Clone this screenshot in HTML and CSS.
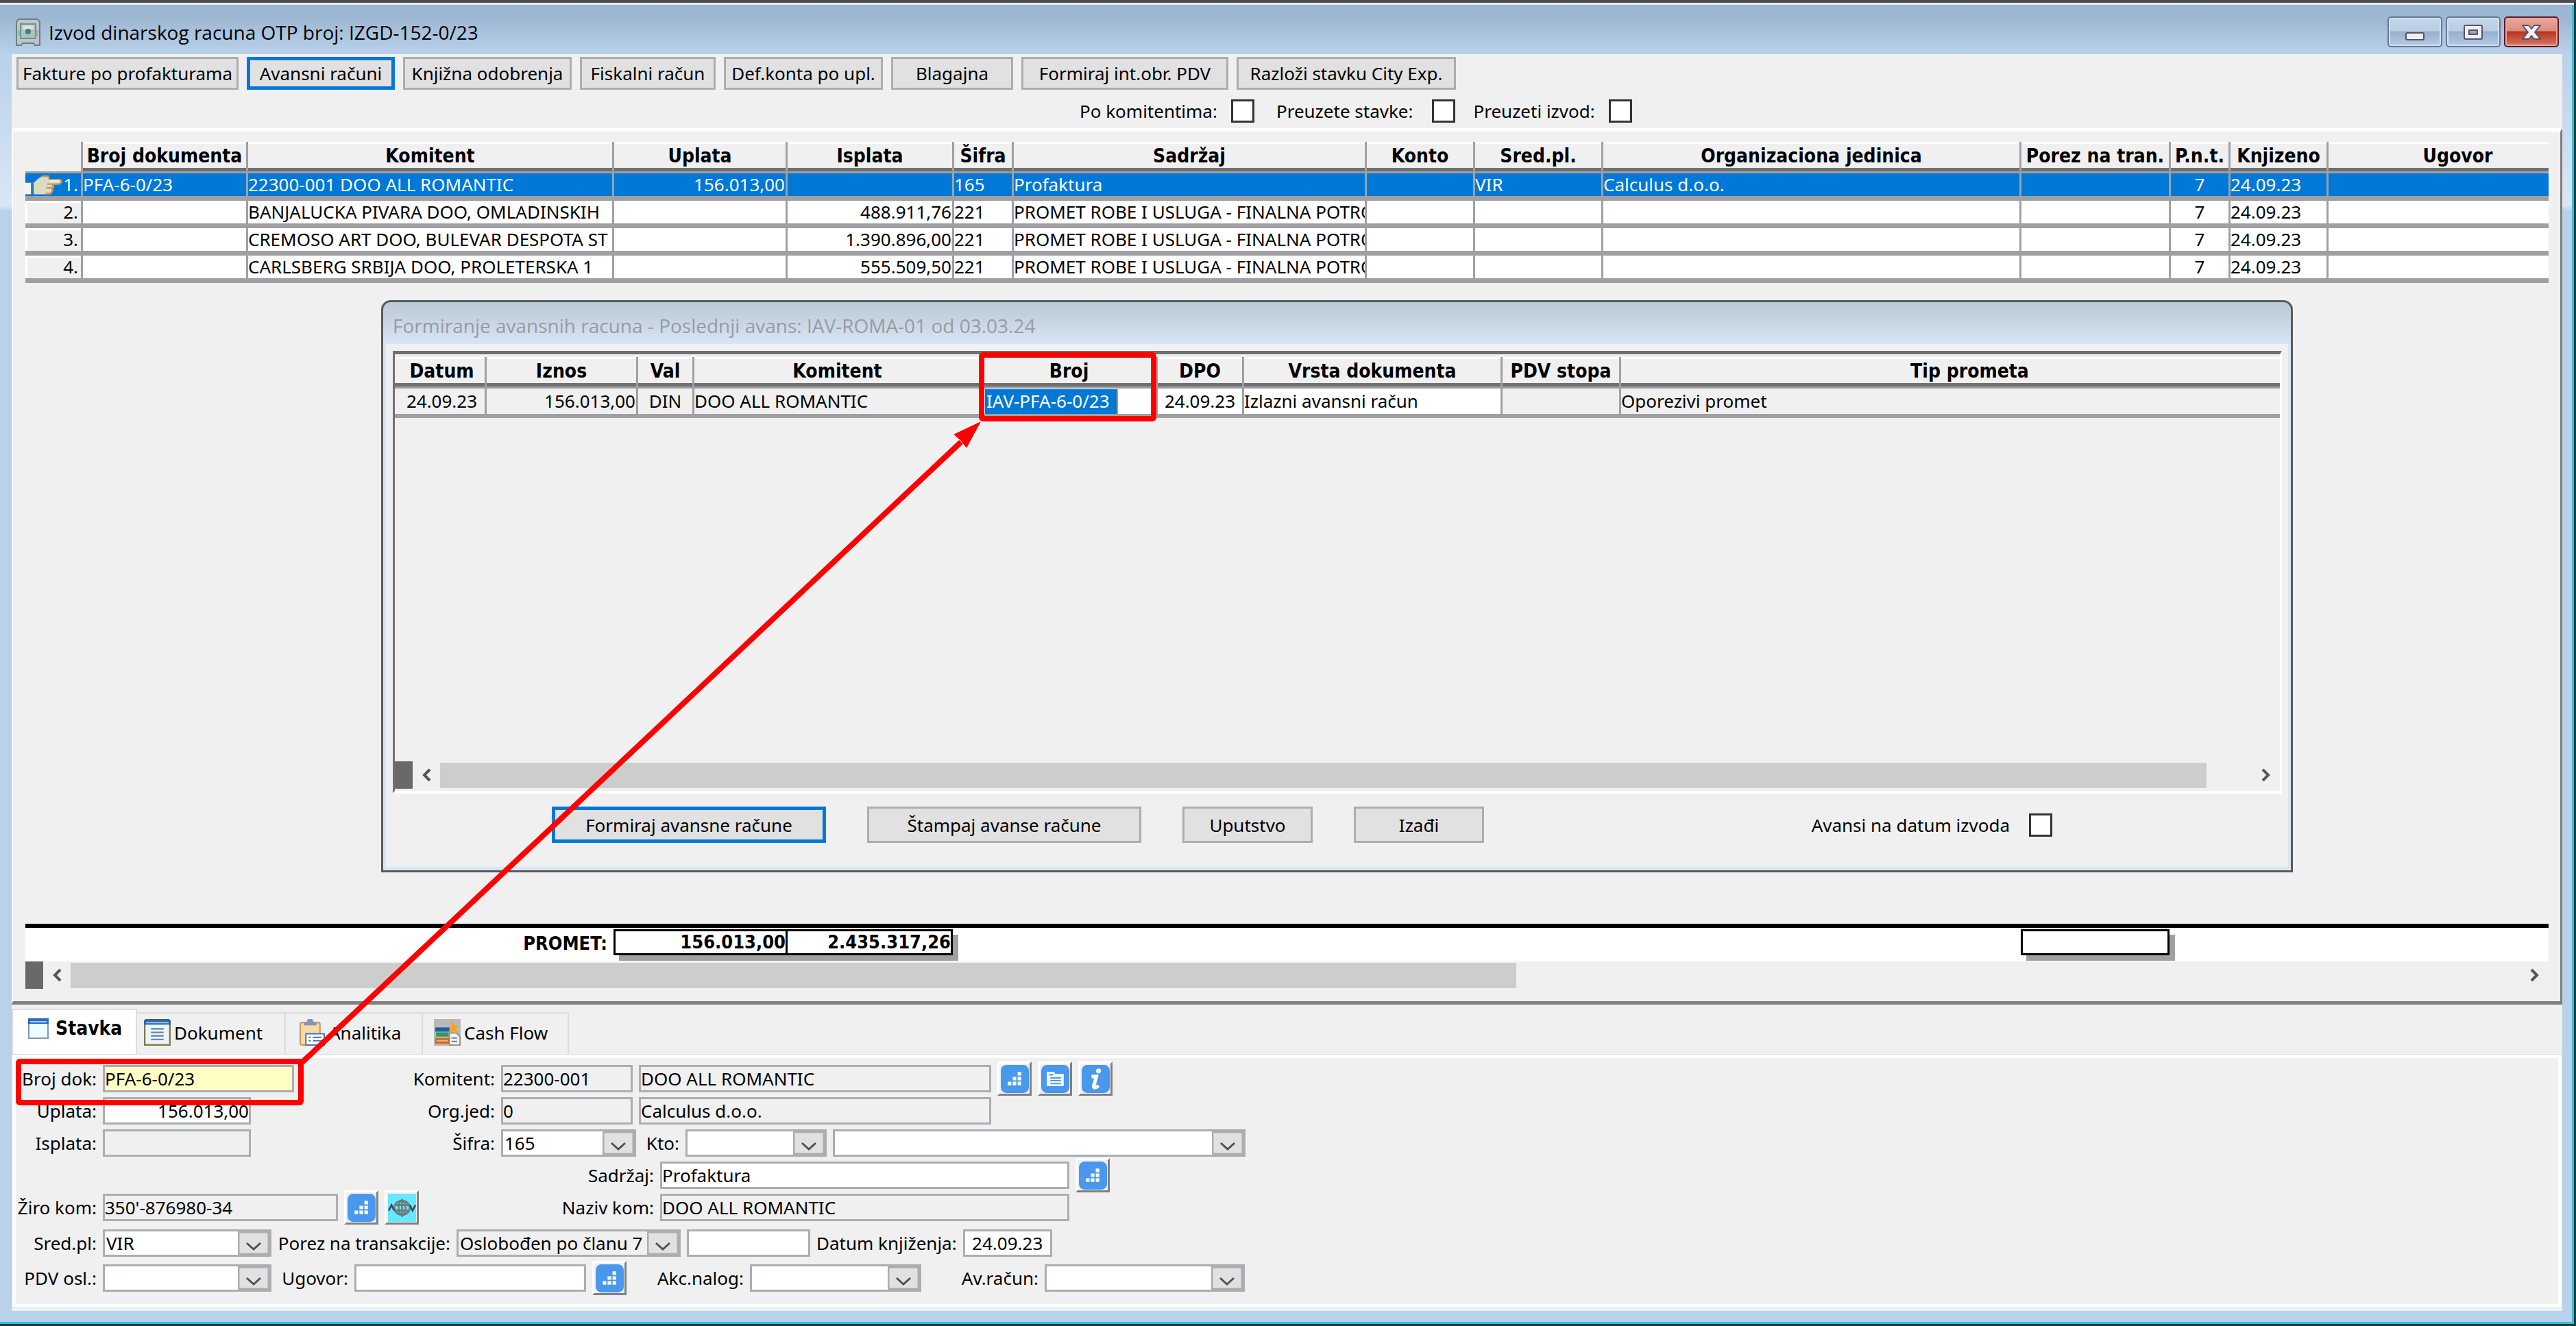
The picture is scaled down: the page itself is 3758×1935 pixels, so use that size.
FILE: index.html
```html
<!DOCTYPE html>
<html lang="sr-Latn">
<head>
<meta charset="utf-8">
<title>Izvod dinarskog racuna OTP broj: IZGD-152-0/23</title>
<link rel="stylesheet" href="styles.css">
</head>
<body>
<svg class="defs" aria-hidden="true">
  <symbol id="i-steps" viewBox="0 0 40 40">
    <rect width="40" height="40" rx="8" fill="#4a98ee"/>
    <path fill="#fff" d="M24 10h5v5h-5zM17 17h5v5h-5zM24 17h5v5h-5zM10 24h5v5h-5zM17 24h5v5h-5zM24 24h5v5h-5z"/>
  </symbol>
  <symbol id="i-card" viewBox="0 0 40 40">
    <rect width="40" height="40" rx="8" fill="#4a98ee"/>
    <path fill="#fff" d="M8 10h11v3h13v17H8z"/>
    <path stroke="#4a98ee" stroke-width="2" d="M11 14h6M13 18.500h15M13 22.500h15M13 26.500h15"/>
  </symbol>
  <symbol id="i-info" viewBox="0 0 40 40">
    <rect width="40" height="40" rx="8" fill="#4a98ee"/>
    <circle cx="24" cy="8.500" r="3.500" fill="#fff"/>
    <path fill="none" stroke="#fff" stroke-width="5" d="M14 16.500h7l-4 14c0 3 4 2 7-1"/>
  </symbol>
  <symbol id="i-globe" viewBox="0 0 40 40">
    <rect width="40" height="40" fill="#66e8ff"/>
    <g fill="none" stroke="#6b7a7a" stroke-width="2.500">
      <ellipse cx="20" cy="20" rx="11" ry="10"/><ellipse cx="20" cy="20" rx="5" ry="10"/>
      <path d="M10 16h20M10 24h20M20 7v26"/><path stroke="#445" d="M1 24l4-8 4 8M31 16l4 8 4-8"/>
    </g>
  </symbol>
</svg>

<div class="window">
  <header class="titlebar">
    <svg class="app-icon" viewBox="0 0 36 40" aria-hidden="true">
      <path fill="#c3c3c9" stroke="#5f8682" stroke-width="2" d="M4 1h28l3 4v34h-7l-2-3H10l-2 3H1V5z"/>
      <path fill="#a9adb2" d="M3 17h30v8H3z"/>
      <rect x="7" y="8" width="22" height="21" fill="#aebfc0" stroke="#6f9490" stroke-width="2"/>
      <path fill="#dfe3e5" d="M10 10h16v6H10z"/><circle cx="18" cy="19" r="4" fill="#34857a"/>
    </svg>
    <h1 class="title">Izvod dinarskog racuna OTP broj: IZGD-152-0/23</h1>
    <div class="controls">
      <button class="ctl" aria-label="Minimize"><svg viewBox="0 0 30 24"><rect x="2" y="13" width="26" height="10" rx="2" fill="#f0f0f0" stroke="#55556b" stroke-width="2"/></svg></button>
      <button class="ctl" aria-label="Maximize"><svg viewBox="0 0 30 24"><rect x="2" y="2" width="26" height="20" rx="2" fill="#f0f0f0" stroke="#55556b" stroke-width="2"/><rect x="9" y="9" width="12" height="6" fill="#8fa9c6" stroke="#55556b" stroke-width="2"/></svg></button>
      <button class="ctl ctl-close" aria-label="Close"><svg viewBox="0 0 30 24"><path fill="#f0f0f0" stroke="#55556b" stroke-width="2" stroke-linejoin="round" d="M2 2h9l4 5 4-5h9l-8 10 8 10h-9l-4-5-4 5H2l8-10z"/></svg></button>
    </div>
  </header>

  <nav class="toolbar">
    <button class="btn b-fakture">Fakture po profakturama</button>
    <button class="btn b-avansni is-default">Avansni računi</button>
    <button class="btn b-knjizna">Knjižna odobrenja</button>
    <button class="btn b-fiskalni">Fiskalni račun</button>
    <button class="btn b-konta">Def.konta po upl.</button>
    <button class="btn b-blagajna">Blagajna</button>
    <button class="btn b-pdv">Formiraj int.obr. PDV</button>
    <button class="btn b-razlozi">Razloži stavku City Exp.</button>
  </nav>

  <div class="filters">
    <label class="check">Po komitentima: <input type="checkbox"></label>
    <label class="check check-loose">Preuzete stavke: <input type="checkbox"></label>
    <label class="check">Preuzeti izvod: <input type="checkbox"></label>
  </div>

  <main class="panel">
    <table class="grid">
      <colgroup>
        <col class="c-num"><col class="c-doc"><col class="c-kom"><col class="c-upl"><col class="c-isp"><col class="c-sif"><col class="c-sad"><col class="c-kto"><col class="c-sred"><col class="c-org"><col class="c-por"><col class="c-pnt"><col class="c-knj"><col>
      </colgroup>
      <thead>
        <tr><th class="blank"></th><th>Broj dokumenta</th><th>Komitent</th><th>Uplata</th><th>Isplata</th><th>Šifra</th><th>Sadržaj</th><th>Konto</th><th>Sred.pl.</th><th>Organizaciona jedinica</th><th>Porez na tran.</th><th>P.n.t.</th><th>Knjizeno</th><th>Ugovor</th></tr>
      </thead>
      <tbody>
        <tr class="selected"><td class="num"><span class="row-no"><svg class="hand" viewBox="0 0 58 30" aria-hidden="true"><path fill="#f4f4ec" d="M0 12h9v18H0z"/><path fill="#2f78b8" d="M9 11h3v19H9z"/><path fill="#dcdcc0" d="M13 12l8-7 6-4h9l2 5h17l3 4-3 4H44l1 5-3 3 1 4-4 4H13z"/><path fill="none" stroke="#c8955f" stroke-width="2.500" d="M26 2h10l2 5h16l3 3-3 4H41l3 3-3 4 2 3-4 5h-7M34 14h7M33 20h8"/><path fill="#f7f3ea" d="M38 8h16v2H38z"/></svg>1.</span></td><td>PFA-6-0/23</td><td>22300-001 DOO ALL ROMANTIC</td><td class="r">156.013,00</td><td></td><td>165</td><td>Profaktura</td><td></td><td>VIR</td><td>Calculus d.o.o.</td><td></td><td class="m">7</td><td>24.09.23</td><td></td></tr>
        <tr><td class="num">2.</td><td></td><td>BANJALUCKA PIVARA DOO, OMLADINSKIH</td><td></td><td class="r">488.911,76</td><td>221</td><td class="clip">PROMET ROBE I USLUGA - FINALNA POTRO</td><td></td><td></td><td></td><td></td><td class="m">7</td><td>24.09.23</td><td></td></tr>
        <tr><td class="num">3.</td><td></td><td>CREMOSO ART DOO, BULEVAR DESPOTA ST</td><td></td><td class="r">1.390.896,00</td><td>221</td><td class="clip">PROMET ROBE I USLUGA - FINALNA POTRO</td><td></td><td></td><td></td><td></td><td class="m">7</td><td>24.09.23</td><td></td></tr>
        <tr><td class="num">4.</td><td></td><td>CARLSBERG SRBIJA DOO, PROLETERSKA 1</td><td></td><td class="r">555.509,50</td><td>221</td><td class="clip">PROMET ROBE I USLUGA - FINALNA POTRO</td><td></td><td></td><td></td><td></td><td class="m">7</td><td>24.09.23</td><td></td></tr>
      </tbody>
    </table>

    <section class="dialog" role="dialog" aria-labelledby="dlg-title">
      <h2 class="dialog-title" id="dlg-title">Formiranje avansnih racuna - Poslednji avans: IAV-ROMA-01 od 03.03.24</h2>
      <div class="dialog-body">
        <div class="dialog-grid">
          <table class="grid">
            <colgroup><col class="d-dat"><col class="d-izn"><col class="d-val"><col class="d-kom"><col class="d-broj"><col class="d-dpo"><col class="d-vrs"><col class="d-pdv"><col></colgroup>
            <thead><tr><th>Datum</th><th>Iznos</th><th>Val</th><th>Komitent</th><th>Broj</th><th>DPO</th><th>Vrsta dokumenta</th><th>PDV stopa</th><th>Tip prometa</th></tr></thead>
            <tbody><tr><td class="m">24.09.23</td><td class="r">156.013,00</td><td class="m">DIN</td><td>DOO ALL ROMANTIC</td><td class="edit"><input class="cell-input" aria-label="Broj" value="IAV-PFA-6-0/23"></td><td class="edit m">24.09.23</td><td class="edit">Izlazni avansni račun</td><td></td><td>Oporezivi promet</td></tr></tbody>
          </table>
          <div class="scroll">
            <span class="split"></span>
            <button class="arrow" aria-label="Levo"><svg viewBox="0 0 14 20"><path d="M12 2L4 10l8 8"/></svg></button>
            <span class="track"><span class="thumb thumb-dialog"></span></span>
            <button class="arrow" aria-label="Desno"><svg viewBox="0 0 14 20"><path d="M2 2l8 8-8 8"/></svg></button>
          </div>
        </div>
        <div class="dialog-actions">
          <button class="btn a-wide is-default">Formiraj avansne račune</button>
          <button class="btn a-wide">Štampaj avanse račune</button>
          <button class="btn a-small">Uputstvo</button>
          <button class="btn a-small">Izađi</button>
          <label class="check">Avansi na datum izvoda <input type="checkbox"></label>
        </div>
      </div>
    </section>

    <div class="totals">
      <span class="totals-label">PROMET:</span>
      <span class="sum-pair"><output>156.013,00</output><output>2.435.317,26</output></span>
      <span></span>
      <output class="sum-box"></output>
    </div>
    <div class="scroll">
      <span class="split"></span>
      <button class="arrow" aria-label="Levo"><svg viewBox="0 0 14 20"><path d="M12 2L4 10l8 8"/></svg></button>
      <span class="track"><span class="thumb thumb-main"></span></span>
      <button class="arrow" aria-label="Desno"><svg viewBox="0 0 14 20"><path d="M2 2l8 8-8 8"/></svg></button>
    </div>
  </main>

  <section class="details">
    <div class="tabs" role="tablist">
      <button class="tab t-stavka is-active" role="tab" aria-selected="true"><svg class="tab-icon-s" viewBox="0 0 30 30"><rect x="1" y="1" width="28" height="28" fill="#ecffff" stroke="#8a93b5" stroke-width="2"/><path fill="#2c6cc0" d="M0 0h30v8H0z"/><path fill="#a9cdf2" d="M3 4h24v2H3z"/></svg>Stavka</button>
      <button class="tab t-dokument" role="tab"><svg class="tab-icon" viewBox="0 0 38 38"><rect x="1" y="3" width="36" height="34" fill="#eaf6f6" stroke="#7f7a4c" stroke-width="2.500"/><path fill="#2f659f" d="M2 0h34l2 3v5H0V3z"/><path fill="#8ab8de" d="M3 4h32v2H3z"/><path stroke="#5f7fae" stroke-width="2" d="M10 14h18M10 19h18M10 24h18M10 29h18"/></svg>Dokument</button>
      <button class="tab t-analitika" role="tab"><svg class="tab-icon" viewBox="0 0 38 38"><rect x="2" y="5" width="28" height="32" rx="3" fill="#f7d9a4" stroke="#c59a5b" stroke-width="2"/><path fill="#8494b4" d="M7 9V6l4-2 2-4h6l2 4 4 2v3z"/><rect x="10" y="21" width="26" height="16" fill="#fff" stroke="#4a7ab5" stroke-width="2"/><path stroke="#4a6fa8" stroke-width="2" d="M14 26h3M20 26h12M14 31h3M20 31h12"/></svg>Analitika</button>
      <button class="tab t-cash" role="tab"><svg class="tab-icon" viewBox="0 0 38 38"><path fill="#b9b9b9" d="M0 0h38v38H0z"/><path fill="#1d5fa3" d="M2 12h20v6H2z"/><path fill="#2f9b5f" d="M3 19h18v6H3z"/><path fill="#d2691e" d="M2 27h20v8H2z"/><path fill="#e9b48a" d="M4 30h16v2H4z"/><path fill="#f5a51c" d="M27 3l3 6 5 1-4 4 2 6-6-3-5 6 1-9z"/><path fill="#f3f3f3" stroke="#8a8468" stroke-width="1.500" d="M22 20h10l5 5v12H22z"/><path stroke="#5b83b5" stroke-width="2" d="M25 27h8M25 32h8"/></svg>Cash Flow</button>
    </div>

    <form class="page">
      <div class="columns">
        <div>
          <div class="row"><label class="l-a" for="brojdok">Broj dok:</label><input class="f w-brojdok hot" id="brojdok" value="PFA-6-0/23" readonly></div>
          <div class="row"><label class="l-a" for="uplata">Uplata:</label><input class="f w-iznos r" id="uplata" value="156.013,00"></div>
          <div class="row"><label class="l-a" for="isplata">Isplata:</label><input class="f w-iznos" id="isplata" readonly></div>
          <div class="row"></div>
          <div class="row"><label class="l-a" for="ziro">Žiro kom:</label><input class="f w-ziro" id="ziro" value="350'-876980-34" readonly><button type="button" class="tool" aria-label="Izbor žiro računa"><svg><use href="#i-steps"/></svg></button><button type="button" class="tool" aria-label="Internet"><svg><use href="#i-globe"/></svg></button></div>
        </div>
        <div>
          <div class="row"><label class="l-b" for="komitent">Komitent:</label><input class="f w-code" id="komitent" value="22300-001" readonly><input class="f w-name" aria-label="Naziv komitenta" value="DOO ALL ROMANTIC" readonly><button type="button" class="tool" aria-label="Izbor komitenta"><svg><use href="#i-steps"/></svg></button><button type="button" class="tool" aria-label="Kartica"><svg><use href="#i-card"/></svg></button><button type="button" class="tool" aria-label="Informacije"><svg><use href="#i-info"/></svg></button></div>
          <div class="row"><label class="l-b" for="orgjed">Org.jed:</label><input class="f w-code" id="orgjed" value="0" readonly><input class="f w-name" aria-label="Organizaciona jedinica" value="Calculus d.o.o." readonly></div>
          <div class="row"><label class="l-b" for="sifra">Šifra:</label><select class="f w-sifra" id="sifra"><option>165</option></select><label class="l-kto" for="kto">Kto:</label><select class="f w-kto" id="kto"><option></option></select><select class="f w-konto" aria-label="Naziv konta"><option></option></select></div>
          <div class="row"><label class="l-c" for="sadrzaj">Sadržaj:</label><input class="f w-sadrzaj" id="sadrzaj" value="Profaktura"><button type="button" class="tool" aria-label="Izbor sadržaja"><svg><use href="#i-steps"/></svg></button></div>
          <div class="row"><label class="l-c" for="naziv">Naziv kom:</label><input class="f w-sadrzaj" id="naziv" value="DOO ALL ROMANTIC" readonly></div>
        </div>
      </div>
      <div class="row row-tall"><label class="l-a" for="sred">Sred.pl:</label><select class="f w-sred" id="sred"><option>VIR</option></select><label class="l-porez" for="porez">Porez na transakcije:</label><select class="f w-porez muted" id="porez"><option>Oslobođen po članu 7</option></select><input class="f w-porez2" aria-label="Iznos poreza"><label for="datum">Datum knjiženja:</label><input class="f w-datum m" id="datum" value="24.09.23"></div>
      <div class="row row-tall"><label class="l-a" for="pdvosl">PDV osl.:</label><select class="f w-sred" id="pdvosl"><option></option></select><label class="l-ugovor" for="ugovor">Ugovor:</label><input class="f w-ugovor" id="ugovor"><button type="button" class="tool" aria-label="Izbor ugovora"><svg><use href="#i-steps"/></svg></button><label class="l-akc" for="akc">Akc.nalog:</label><select class="f w-akc" id="akc"><option></option></select><label class="l-akc" for="av">Av.račun:</label><select class="f w-av" id="av"><option></option></select></div>
    </form>
  </section>

  <svg class="callout" aria-hidden="true">
    <rect x="27" y="1549" width="412" height="60" rx="2"/>
    <rect x="1432" y="518" width="251" height="93" rx="2"/>
    <path d="M441 1550L1402 645"/>
    <path class="head" d="M1430 616l-38 18 10 9 8 10z"/>
  </svg>
</div>
</body>
</html>
```
FILE: styles.css
```css
* { box-sizing: border-box; }

body {
  margin: 0;
  background: #f0f0f0;
  color: #000;
  font: 26px/32px "Noto Sans", sans-serif;
}

button, input, select { font: inherit; color: inherit; margin: 0; }
.defs { display: none; }

/* window frame */
.window {
  position: relative;
  display: flex;
  flex-direction: column;
  min-height: 100vh;
  padding: 0 17px 19px 17px;
  border: solid #22393c;
  border-width: 4px 3px 3px 0;
  border-top-color: #4a4a4a;
  box-shadow: inset 0 3px #e4ecf3, inset -3px -3px #2cc3dc;
  background: linear-gradient(#99b4d1, #9fb9d5 25px, #b9d1ea 75px, #dae6f4 296px, #b9d1ea 304px);
}

.titlebar {
  display: flex;
  align-items: center;
  height: 75px;
  padding: 16px 5px 6px 6px;
}
.app-icon { width: 36px; height: 40px; }
.title { flex: 1; margin: 0 0 0 12px; font: 28px/36px "Open Sans", sans-serif; }
.controls { display: flex; gap: 5px; }
.ctl {
  display: flex; align-items: center; justify-content: center;
  width: 80px; height: 45px; padding: 0;
  border: 2px solid #66799a;
  border-radius: 5px;
  box-shadow: inset 0 0 0 2px #d3e0ef;
  background: linear-gradient(#c5d6e9, #b9cde3 46%, #97b0cc 50%, #b3cbe5);
}
.ctl svg { width: 30px; height: 24px; }
.ctl-close {
  border-color: #5a1a28;
  box-shadow: inset 0 0 0 2px #eba79c;
  background: linear-gradient(#eaa89c, #dd8c7f 46%, #b5351f 50%, #d67867);
}

/* toolbar */
.toolbar { display: flex; gap: 12px; padding: 4px 7px 0; background: #f0f0f0; }
.btn {
  height: 48px; padding: 0;
  border: 3px solid #adadad;
  background: #e1e1e1;
  white-space: nowrap;
}
.btn.is-default { border: 5px solid #0078d7; }
.b-fakture { width: 324px; }
.b-avansni { width: 216px; }
.b-knjizna { width: 246px; }
.b-fiskalni { width: 198px; }
.b-konta { width: 232px; }
.b-blagajna { width: 178px; }
.b-pdv { width: 302px; }
.b-razlozi { width: 320px; }

.filters {
  display: flex; align-items: center; gap: 26px;
  height: 56px;
  padding: 6px 0 0 1558px;
  background: #f0f0f0;
}
.check { display: flex; align-items: center; gap: 20px; white-space: nowrap; }
.check-loose { margin-left: 6px; gap: 28px; }
.check input {
  appearance: none;
  width: 34px; height: 34px;
  border: 3px solid #333;
  background: #fff;
}

/* main panel */
.panel {
  position: relative;
  flex: 1;
  display: flex;
  flex-direction: column;
  padding: 15px 17px 18px 18px;
  border: solid #808080;
  border-width: 5px 3px 5px 2px;
  border-top-color: #fff;
  border-left-color: #fff;
  background: #f0f0f0;
}

.grid { width: 100%; table-layout: fixed; border-collapse: separate; border-spacing: 0; }
.grid th {
  height: 46px; padding: 0 0 4px;
  border-right: 3px solid #a0a0a4;
  box-shadow: inset 0 3px #fff, inset 0 -3px #a0a0a4, inset 0 -8px #707070;
  font: bold 28px/32px "DejaVu Sans Condensed", sans-serif;
  text-align: center;
  white-space: nowrap;
}
.grid th.blank { box-shadow: inset 0 -3px #a0a0a4; }
.grid td {
  height: 40px; padding: 0;
  border-right: 3px solid #a0a0a4;
  border-bottom: 7px solid #a0a0a4;
  background: #fff;
  line-height: 33px;
  white-space: nowrap;
}
.grid th:last-child, .grid td:last-child { border-right: 0; }
.grid th:last-child { padding-left: 56px; }
.grid .clip { overflow: hidden; }
.grid .r { text-align: right; padding-right: 1px; }
.grid .m { text-align: center; }
.grid td.num { background: #f0f0f0; text-align: right; padding-right: 4px; box-shadow: inset 3px 3px #fff; }
.grid .selected td { background: #0078d7; color: #fff; box-shadow: none; }
.row-no { display: flex; justify-content: space-between; }
.hand { width: 54px; height: 33px; }

.c-num { width: 84px; }
.c-doc { width: 241px; }
.c-kom { width: 534px; }
.c-upl { width: 253px; }
.c-isp { width: 243px; }
.c-sif { width: 87px; }
.c-sad { width: 515px; }
.c-kto { width: 158px; }
.c-sred { width: 187px; }
.c-org { width: 610px; }
.c-por { width: 218px; }
.c-pnt { width: 87px; }
.c-knj { width: 143px; }

.totals {
  display: grid;
  grid-template-columns: 858px 495px 1558px 217px 1fr;
  height: 55px;
  margin-top: auto;
  padding-top: 2px;
  border-top: 6px solid #000;
  background: #fff;
  font: bold 27px/32px "DejaVu Sans Condensed", sans-serif;
}
.totals-label { padding: 5px 9px 0 0; text-align: right; }
.sum-pair { display: grid; grid-template-columns: 254px 241px; }
.sum-pair output { border: 3px solid #000; text-align: right; }
.sum-pair output + output { border-left: 0; }
.sum-pair, .sum-box { height: 38px; background: #fff; box-shadow: 8px 8px #a0a0a0; }
.sum-box { border: 3px solid #000; }

.scroll { display: flex; align-items: center; height: 40px; }
.split { width: 26px; height: 100%; background: #696969; }
.arrow { display: flex; align-items: center; justify-content: center; width: 40px; height: 100%; padding: 0; border: 0; background: none; }
.arrow svg { width: 14px; height: 20px; fill: none; stroke: #555; stroke-width: 4; }
.track { flex: 1; height: 37px; }
.thumb { display: block; height: 100%; background: #cdcdcd; }
.thumb-dialog { width: calc(100% - 67px); }
.thumb-main { width: 59%; }

/* floating dialog */
.dialog {
  position: absolute;
  left: 537px; right: 390px; top: 246px; bottom: 188px;
  display: flex;
  flex-direction: column;
  padding: 0 4px 5px;
  border: 3px solid #5a5a5a;
  border-radius: 14px 14px 0 0;
  background: linear-gradient(#bccbd9, #c3d0dd 18px, #d8e5f4 60px);
}
.dialog-title { margin: 0; padding: 16px 12px 9px 10px; color: #989ba0; font: 28px/36px "Open Sans", sans-serif; }
.dialog-body { flex: 1; display: flex; flex-direction: column; padding: 10px 9px 0 10px; background: #f0f0f0; }
.dialog-grid {
  flex: 1;
  display: flex;
  flex-direction: column;
  border: solid #fff;
  border-width: 5px 3px 4px;
  border-top-color: #707070;
  border-left-color: #707070;
}
.dialog-grid .scroll { margin: auto 0 3px; }
.dialog .grid { margin-top: 4px; }
.dialog .grid td { height: 43px; border-bottom-width: 6px; background: #f0f0f0; line-height: 37px; }
.dialog .grid th:first-child, .dialog .grid td:first-child { padding-left: 6px; }
.dialog .grid td.edit { background: #fff; }
.d-dat { width: 134px; }
.d-izn { width: 221px; }
.d-val { width: 82px; }
.d-kom { width: 420px; }
.d-broj { width: 256px; }
.d-dpo { width: 126px; }
.d-vrs { width: 377px; }
.d-pdv { width: 173px; }
.cell-input {
  display: block;
  width: 194px; height: 36px; margin-left: 4px; padding: 0 0 0 2px;
  border: 0;
  border-right: 2px solid #ff8728;
  background: #0078d7;
  color: #fff;
}
.dialog-actions { display: flex; align-items: center; gap: 60px; padding: 19px 335px 35px 232px; }
.dialog-actions .btn { height: 53px; }
.dialog-actions .check { margin-left: auto; gap: 28px; }
.a-wide { width: 400px; }
.a-small { width: 190px; }

/* detail tabs */
.details { background: #f0f0f0; padding: 6px 0 4px; }
.tabs { display: flex; align-items: flex-end; height: 66px; }
.tab {
  display: flex; align-items: center; gap: 5px;
  height: 61px; padding: 0 0 4px;
  border: 2px solid #dcdcdc;
  border-bottom: 0;
  border-left: 0;
  background: #f0f0f0;
}
.tab.is-active { height: 66px; padding-bottom: 10px; border-left: 2px solid #dcdcdc; gap: 10px; background: #fff; font: bold 28px/32px "DejaVu Sans Condensed", sans-serif; }
.t-stavka.tab { width: 183px; padding-left: 22px; }
.t-dokument.tab { width: 217px; padding-left: 10px; }
.t-analitika.tab { width: 200px; padding-left: 19px; }
.t-cash.tab { width: 213px; padding-left: 16px; }
.tab-icon-s { width: 30px; height: 30px; }
.tab-icon { width: 39px; height: 39px; }

.page {
  padding: 11px 7px 18px;
  border: 1px solid #dcdcdc;
  box-shadow: inset 0 0 0 5px #fff;
}
.columns { display: grid; grid-template-columns: 576px 1fr; margin-bottom: 3px; }
.row { display: flex; align-items: center; gap: 9px; height: 47px; }
.row-tall { height: 51px; }
.row label { flex: none; text-align: right; white-space: nowrap; }
.l-a { width: 116px; }
.l-b { width: 121px; }
.l-c { width: 353px; }
.l-kto { width: 54px; }
.l-porez { width: 252px; }
.l-ugovor { width: 103px; }
.l-akc { width: 162px; }

.f {
  height: 40px; padding: 0;
  border: 3px solid #abadb3;
  border-radius: 0;
  background-color: #fff;
}
.f[readonly], .f.muted { background-color: #f0f0f0; }
.f.hot { background-color: #ffffc4; }
.f.r { text-align: right; }
.f.m { text-align: center; }
select.f {
  appearance: none;
  padding: 0 46px 0 2px;
  background-image: url("data:image/svg+xml,%3Csvg xmlns='http://www.w3.org/2000/svg' width='46' height='34'%3E%3Crect x='1' y='1' width='44' height='32' fill='%23e1e1e1' stroke='%23adadad' stroke-width='3'/%3E%3Cpath d='M13 17l10 9 10-9' fill='none' stroke='%23505050' stroke-width='3'/%3E%3C/svg%3E");
  background-repeat: no-repeat;
  background-position: right center;
}
.w-brojdok { width: 279px; }
.w-iznos { width: 216px; }
.w-ziro { width: 343px; }
.w-code { width: 192px; }
.w-name { width: 514px; }
.w-sifra { width: 197px; }
.w-kto { width: 206px; }
.w-konto { width: 602px; }
.w-sadrzaj { width: 597px; }
.w-sred { width: 246px; }
.w-porez { width: 327px; }
.w-porez2 { width: 180px; }
.w-datum { width: 130px; }
.w-ugovor { width: 338px; }
.w-akc { width: 250px; }
.w-av { width: 292px; }

.tool {
  flex: none;
  width: 50px; height: 50px; padding: 2px;
  border: 3px solid #808080;
  border-top-color: #fff;
  border-left-color: #fff;
  background: #f0f0f0;
}
.tool svg { display: block; width: 41px; height: 41px; }

/* red annotation above the form and the dialog */
.callout { position: absolute; left: 0; top: -4px; width: 100%; height: 100%; overflow: visible; pointer-events: none; fill: none; stroke: #f00; stroke-width: 8; }
.callout .head { fill: #f00; stroke-width: 1; }
```
